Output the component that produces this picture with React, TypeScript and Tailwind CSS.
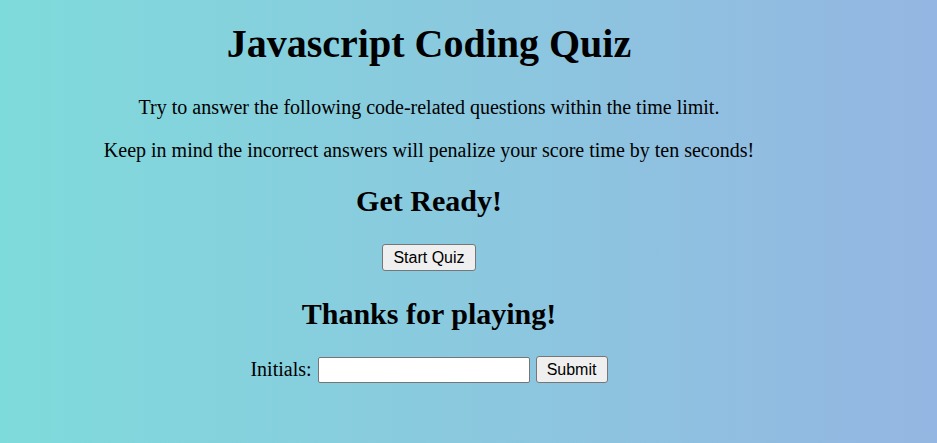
import React from 'react';

export default function App() {
  return (
    <div className="min-h-screen w-full bg-linear-to-r from-[#7edbdb] to-[#94b6e2] text-black">
      <div
        className="w-[858px] flex flex-col items-center text-center"
        style={{ fontFamily: '"Liberation Serif", "Times New Roman", serif' }}
      >
        <h1 className="mt-[21px] text-[40px] font-bold leading-[46px]">Javascript Coding Quiz</h1>
        <p className="mt-[29px] text-[20px] leading-[23px]">
          Try to answer the following code-related questions within the time limit.
        </p>
        <p className="mt-[20px] text-[20px] leading-[23px]">
          Keep in mind the incorrect answers will penalize your score time by ten seconds!
        </p>
        <h2 className="mt-[22px] text-[30px] font-bold leading-[34px]">Get Ready!</h2>
        <button
          className="mt-[26px] h-[27px] w-[94px] rounded-[3px] border border-[#767676] bg-[#efefef] text-[16px] leading-none"
          style={{ fontFamily: '"Liberation Sans", Arial, sans-serif' }}
        >
          Start Quiz
        </button>
        <h2 className="mt-[26px] text-[30px] font-bold leading-[34px]">Thanks for playing!</h2>
        <div className="mt-[25px] flex items-center">
          <label className="text-[20px] leading-[23px]">Initials:</label>
          <input
            type="text"
            className="ml-[6px] h-[26px] w-[212px] rounded-[2px] border border-[#767676] bg-white px-1 text-[16px]"
          />
          <button
            className="ml-[6px] h-[27px] w-[72px] rounded-[3px] border border-[#767676] bg-[#efefef] text-[16px] leading-none"
            style={{ fontFamily: '"Liberation Sans", Arial, sans-serif' }}
          >
            Submit
          </button>
        </div>
      </div>
    </div>
  );
}
